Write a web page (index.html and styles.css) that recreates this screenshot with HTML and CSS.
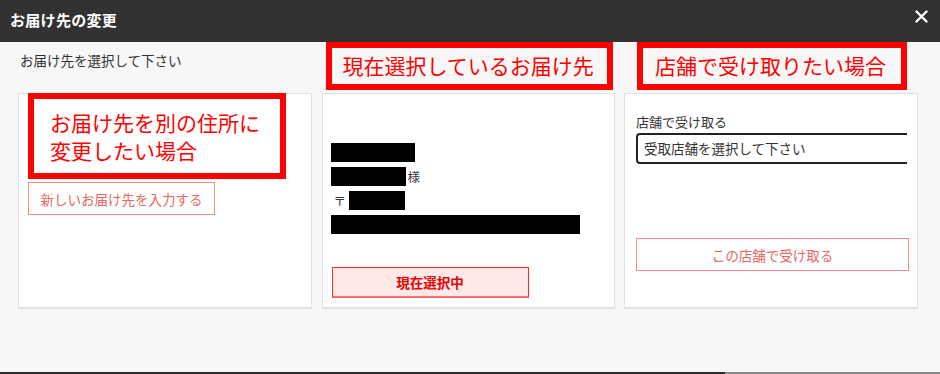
FILE: index.html
```html
<!DOCTYPE html>
<html lang="ja">
<head>
    <meta charset="UTF-8">
    <meta name="viewport" content="width=device-width, initial-scale=1.0">
    <title>お届け先の変更</title>
    <link rel="stylesheet" href="styles.css">
</head>
<body>
    <div class="modal">
        <header class="modal-head">
            <h1 class="modal-title">お届け先の変更</h1>
            <button class="close-btn" aria-label="閉じる">
                <svg width="13" height="13" viewBox="0 0 13 13">
                    <path d="M1.5 1.5 L11.5 11.5 M11.5 1.5 L1.5 11.5" stroke="#fff" stroke-width="2.4" stroke-linecap="round"/>
                </svg>
            </button>
        </header>

        <div class="modal-body">
            <div class="top-row">
                <p class="lead">お届け先を選択して下さい</p>
                <div class="note note-current">現在選択しているお届け先</div>
                <div class="note note-store">店舗で受け取りたい場合</div>
            </div>

            <div class="cards">
                <!-- new address -->
                <div class="card card-new">
                    <div class="note note-new">
                        <div>お届け先を別の住所に</div>
                        <div>変更したい場合</div>
                    </div>
                    <button class="btn-outline btn-new">新しいお届け先を入力する</button>
                </div>

                <!-- current address -->
                <div class="card card-current">
                    <div class="address">
                        <div class="line"><span class="mask" style="width:84px"></span></div>
                        <div class="line"><span class="mask" style="width:75px"></span><span class="sama">様</span></div>
                        <div class="line"><span class="zip">〒</span><span class="mask" style="width:56px"></span></div>
                        <div class="line"><span class="mask" style="width:249px"></span></div>
                    </div>
                    <button class="btn-selected">現在選択中</button>
                </div>

                <!-- store pickup -->
                <div class="card card-store">
                    <label class="store-label">店舗で受け取る</label>
                    <div class="select-wrap">
                        <div class="select-box">受取店舗を選択して下さい</div>
                    </div>
                    <button class="btn-outline btn-store">この店舗で受け取る</button>
                </div>
            </div>
        </div>

        <div class="bottom-edge"></div>
    </div>
</body>
</html>
```

FILE: styles.css
```css
body {
    margin: 0;
    background-color: #f7f7f7;
    font-family: "Noto Sans CJK JP", "Noto Sans", sans-serif;
    color: #333;
}

.modal {
    width: 940px;
    height: 374px;
    display: flex;
    flex-direction: column;
    overflow: hidden;
}

.modal-head {
    height: 42px;
    background-color: #323232;
    display: flex;
    align-items: center;
    justify-content: space-between;
    padding: 0 12px 0 10px;
    box-sizing: border-box;
    flex-shrink: 0;
}

.modal-title {
    margin: 0;
    color: #fff;
    font-size: 15px;
    font-weight: bold;
    line-height: 20px;
    letter-spacing: 0.3px;
    padding-bottom: 2px;
}

.close-btn {
    background: none;
    border: none;
    padding: 0;
    width: 13px;
    height: 13px;
    margin-bottom: 9px;
    cursor: pointer;
}

.close-btn svg {
    display: block;
}

.modal-body {
    padding-left: 18px;
}

/* row above the cards */
.top-row {
    display: grid;
    grid-template-columns: 294px 293px 294px;
    column-gap: 9.5px;
    height: 51px;
}

.lead {
    margin: 9px 0 0 2px;
    font-size: 13.5px;
    line-height: 18px;
}

.note {
    border: 6px solid #ff0000;
    color: #f00;
    font-size: 21px;
    box-sizing: border-box;
}

.note-current,
.note-store {
    height: 48px;
    line-height: 34px;
    padding-left: 11px;
    white-space: nowrap;
}

.note-current {
    margin-left: 4px;
    width: 287px;
}

.note-store {
    margin-left: 13px;
    width: 270px;
    padding-left: 12px;
}

/* cards */
.cards {
    display: grid;
    grid-template-columns: 294px 293px 294px;
    column-gap: 9.5px;
}

.card {
    height: 215px;
    background-color: #fff;
    border: 1px solid #e2e2e2;
    box-shadow: 0 1px 1px rgba(0, 0, 0, 0.08);
    box-sizing: border-box;
}

.card-new {
    padding: 0 0 0 9px;
}

.note-new {
    width: 258px;
    margin-top: -1px;
    padding: 9px 0 9px 16px;
    line-height: 28px;
}

.btn-outline {
    display: block;
    height: 33px;
    background-color: #fff;
    border: 1px solid #f08a84;
    color: #e4685f;
    font-family: inherit;
    font-size: 13.5px;
    box-sizing: border-box;
    cursor: pointer;
}

.btn-new {
    margin-top: 3px;
    padding: 0 10px;
    width: 187px;
}

.card-current {
    padding: 46px 0 0 8px;
}

.address .line {
    height: 24px;
    display: flex;
    align-items: center;
    font-size: 12.5px;
}

.mask {
    display: inline-block;
    height: 19px;
    background-color: #000;
}

.sama {
    margin-left: 2px;
}

.zip {
    margin: 0 3px 0 3px;
}

.btn-selected {
    display: block;
    margin-top: 31px;
    margin-left: 1px;
    width: 197px;
    height: 31px;
    background-color: #ffe8e8;
    border: 1px solid #ff2a2a;
    border-bottom: 2px solid #ff6a6a;
    color: #e60000;
    font-family: inherit;
    font-size: 13.5px;
    font-weight: bold;
    box-sizing: border-box;
}

.card-store {
    padding: 19px 10px 0 10px;
}

.store-label {
    display: block;
    font-size: 13px;
    line-height: 18px;
    margin-left: 1px;
}

.select-wrap {
    margin-top: 2px;
    overflow: hidden;
}

.select-box {
    width: 300px;
    height: 31px;
    border: 2px solid #222;
    border-radius: 4px;
    padding-left: 6px;
    font-size: 13.5px;
    line-height: 27px;
    box-sizing: border-box;
    margin-left: 1px;
}

.btn-store {
    width: 273px;
    margin-top: 74px;
    margin-left: 1px;
}

.bottom-edge {
    margin-top: auto;
    height: 2px;
    background: linear-gradient(to right, #2b2b2b 725px, #8a8a8a 725px);
}
```
